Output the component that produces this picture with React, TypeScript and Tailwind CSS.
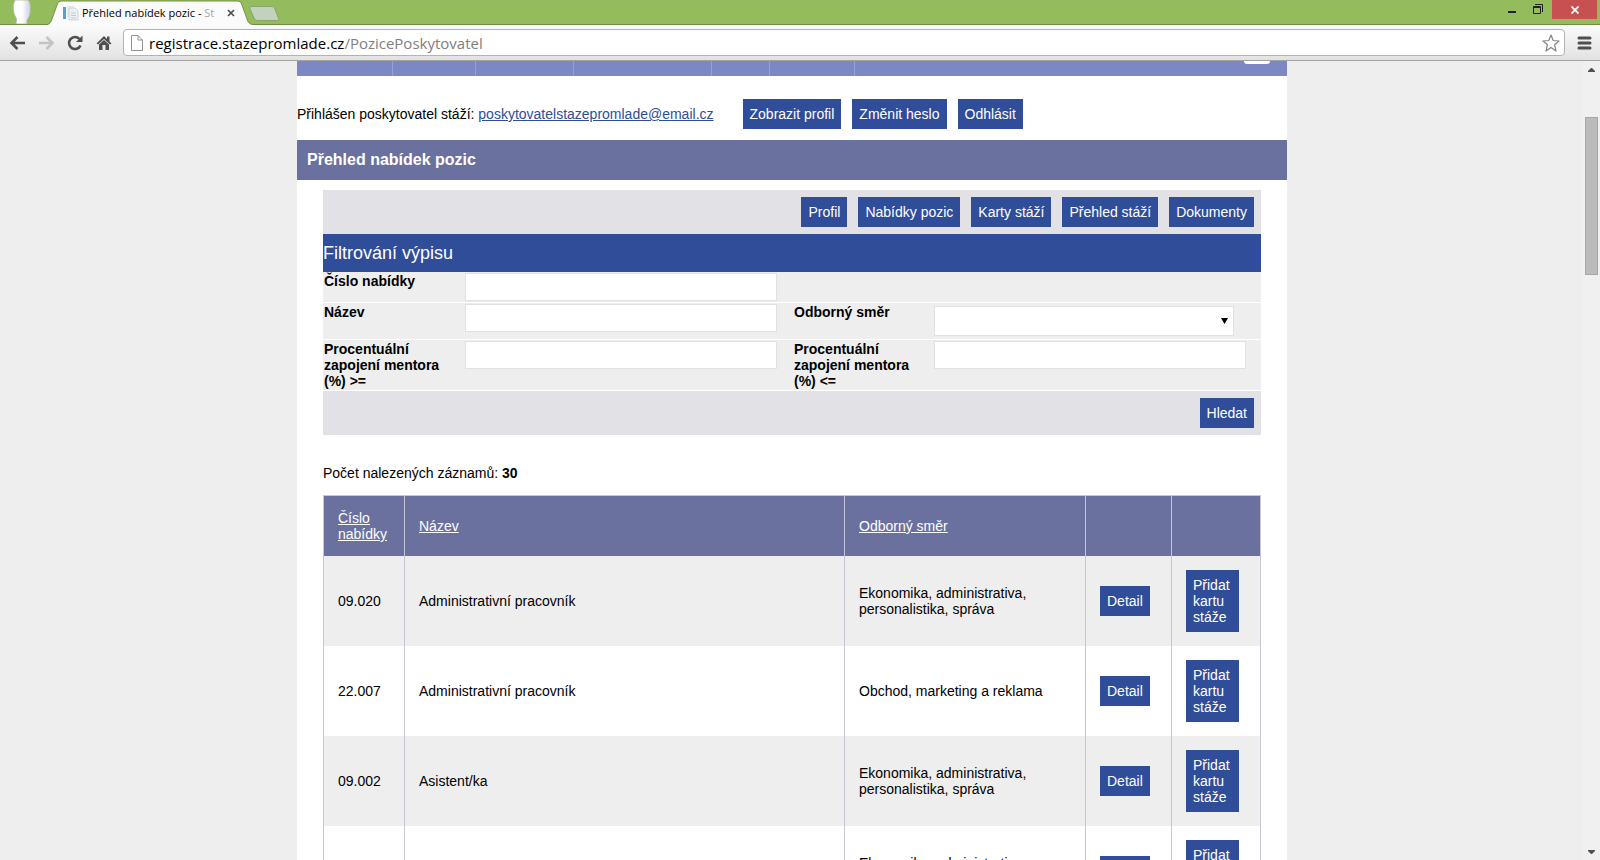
import type { ReactNode } from "react";

type Position = { id: string; code: string; title: string; field: string };

const POSITIONS: Position[] = [
  { id: "1", code: "09.020", title: "Administrativní pracovník", field: "Ekonomika, administrativa, personalistika, správa" },
  { id: "2", code: "22.007", title: "Administrativní pracovník", field: "Obchod, marketing a reklama" },
  { id: "3", code: "09.002", title: "Asistent/ka", field: "Ekonomika, administrativa, personalistika, správa" },
  { id: "4", code: "09.021", title: "Asistent/ka", field: "Ekonomika, administrativa, personalistika, správa" },
];

const SECTIONS = ["Profil", "Nabídky pozic", "Karty stáží", "Přehled stáží", "Dokumenty"];

function Btn({ children }: { children: ReactNode }) {
  return (
    <button type="button" className="bg-[#2f4d99] p-[7px] text-left text-sm leading-4 text-white">
      {children}
    </button>
  );
}

function TitleBar() {
  return (
    <div className="flex h-[25px] shrink-0 items-start border-b border-[#6f8b47] bg-[#94bb5c]">
      <svg className="ml-3 h-6 w-5 shrink-0" viewBox="0 0 20 24" aria-hidden="true">
        <defs>
          <linearGradient id="head" x1="0" x2="1">
            <stop offset="0.5" stopColor="#ffffff" />
            <stop offset="1" stopColor="#c9d0e0" />
          </linearGradient>
        </defs>
        <path
          d="M3 0C1 4 1 8 1.500 11C2 15 4 17 4.500 19L4 24H15L15 20C18 17 18.500 12 18.500 8C18.500 4 17.500 1 16 0Z"
          fill="url(#head)"
          stroke="#a9b99a"
          strokeWidth="0.800"
        />
      </svg>

      <div className="relative ml-[15px] flex h-[25px] w-[206px] shrink-0 items-center pl-4">
        <svg className="absolute inset-0" width="206" height="25" viewBox="0 0 206 25" aria-hidden="true">
          <path
            d="M0 25C3 24 4 22 5 19L10 5C11 2 12 1 15 1H190C193 1 194 2 195 5L200 19C201 22 202 24 206 25Z"
            fill="#fbfbfb"
          />
          <path
            d="M0 24.500C3 24 4 22 5 19L10 5C11 2 12 1 15 1H190C193 1 194 2 195 5L200 19C201 22 202 24 206 24.500"
            fill="none"
            stroke="#76914d"
          />
        </svg>
        <svg className="relative shrink-0" width="16" height="16" viewBox="0 0 16 16" aria-hidden="true">
          <path d="M0 2H3V14H0Z" fill="#5b9fd0" />
          <path d="M4 1H11V12H4Z" fill="#e3edf5" />
          <path d="M6 3H12L15 6V15H6Z" fill="#eef1f4" stroke="#c3ccd4" strokeWidth="0.800" />
          <path d="M8 8H13M8 10.500H13M8 13H13" stroke="#c0c9d2" />
        </svg>
        <span className="relative ml-[3px] w-[140px] whitespace-nowrap font-['Open_Sans',sans-serif] text-[11px] leading-4 text-black">
          Přehled nabídek pozic - <span className="text-[#a8a8a8]">St</span>
        </span>
        <button type="button" aria-label="Zavřít kartu" className="relative ml-1">
          <svg width="10" height="10" viewBox="0 0 10 10" aria-hidden="true">
            <path d="M2 2L8 8M8 2L2 8" stroke="#4d4d4d" strokeWidth="1.700" />
          </svg>
        </button>
      </div>

      <button type="button" aria-label="Nová karta" className="-ml-1 mt-[6px] shrink-0">
        <svg width="31" height="15" viewBox="0 0 31 15" aria-hidden="true">
          <path
            d="M3 0.500H22C24 0.500 25 1 26 3L29 11C30 13 30 14.500 28 14.500H9C7 14.500 6 14 5 12L1 3C0.500 1.500 1 0.500 3 0.500Z"
            fill="#c3d2bf"
            stroke="#88a566"
          />
        </svg>
      </button>

      <div className="ml-auto flex shrink-0 items-start pr-[3px]">
        <button type="button" aria-label="Minimalizovat">
          <svg width="26" height="19" viewBox="0 0 26 19" aria-hidden="true">
            <path d="M8 11H16V13H8Z" fill="#222" />
          </svg>
        </button>
        <button type="button" aria-label="Obnovit">
          <svg width="26" height="19" viewBox="0 0 26 19" aria-hidden="true">
            <path d="M7.500 6.500H14.500V13.500H7.500Z" fill="none" stroke="#222" />
            <path d="M7 7.500H15M9 4.500H16.500V12" fill="none" stroke="#222" />
          </svg>
        </button>
        <button type="button" aria-label="Zavřít" className="flex h-[19px] w-[45px] items-center justify-center bg-[#c75050]">
          <svg width="8" height="8" viewBox="0 0 8 8" aria-hidden="true">
            <path d="M0.500 0.500L7.500 7.500M7.500 0.500L0.500 7.500" stroke="#fff" strokeWidth="1.800" />
          </svg>
        </button>
      </div>
    </div>
  );
}

function Toolbar() {
  return (
    <div className="flex h-9 shrink-0 items-center border-b border-[#a3a3a3] bg-linear-to-b from-[#fbfbfb] to-[#e2e2e2] pl-[9px] pr-2">
      <button type="button" aria-label="Zpět">
        <svg width="17" height="16" viewBox="0 0 17 16" aria-hidden="true">
          <path d="M8.500 2L2.500 8L8.500 14M3 8H16" fill="none" stroke="#4f4f4f" strokeWidth="2.600" />
        </svg>
      </button>
      <button type="button" aria-label="Vpřed" className="ml-3">
        <svg width="17" height="16" viewBox="0 0 17 16" aria-hidden="true">
          <path d="M8.500 2L14.500 8L8.500 14M14 8H1" fill="none" stroke="#c4c4c4" strokeWidth="2.600" />
        </svg>
      </button>
      <button type="button" aria-label="Načíst znovu" className="ml-3">
        <svg width="17" height="16" viewBox="0 0 17 16" aria-hidden="true">
          <path d="M13.500 10.500A6 6 0 1 1 12.500 4" fill="none" stroke="#4f4f4f" strokeWidth="2.600" />
          <path d="M15.500 0.500V7H9Z" fill="#4f4f4f" />
        </svg>
      </button>
      <button type="button" aria-label="Domů" className="ml-3">
        <svg width="16" height="16" viewBox="0 0 16 16" aria-hidden="true">
          <path d="M8 1L0.500 8.500L2 9.500L8 4L14 9.500L15.500 8.500L13.500 6.500V1.500H11V4Z" fill="#4f4f4f" />
          <path d="M3 9.500L8 5L13 9.500V15H9.500V10H6.500V15H3Z" fill="#4f4f4f" />
        </svg>
      </button>

      <div className="ml-[11px] flex h-[27px] min-w-0 flex-1 items-center rounded-sm border border-[#b3b3b3] bg-white pl-[7px] pr-1">
        <svg className="shrink-0" width="12" height="16" viewBox="0 0 12 16" aria-hidden="true">
          <path d="M0.500 0.500H7L11.500 5V15.500H0.500ZM7 0.500V5H11.500" fill="#fff" stroke="#909090" />
        </svg>
        <label htmlFor="path" className="ml-[6px] font-['Open_Sans',sans-serif] text-[15px] leading-5 text-black">
          registrace.stazepromlade.cz
        </label>
        <input
          id="path"
          type="text"
          defaultValue="/PozicePoskytovatel"
          className="min-w-0 flex-1 bg-transparent font-['Open_Sans',sans-serif] text-[15px] leading-5 text-[#808080] outline-none"
        />
        <button type="button" aria-label="Přidat záložku" className="shrink-0">
          <svg width="18" height="18" viewBox="0 0 18 18" aria-hidden="true">
            <path
              d="M9 1L11.200 6.500L17 7L12.600 10.800L14 17L9 13.600L4 17L5.400 10.800L1 7L6.800 6.500Z"
              fill="#fff"
              stroke="#858585"
              strokeWidth="1.200"
              strokeLinejoin="round"
            />
          </svg>
        </button>
      </div>

      <button type="button" aria-label="Nabídka" className="ml-3 shrink-0">
        <svg width="15" height="14" viewBox="0 0 15 14" aria-hidden="true">
          <path d="M2 2H13M2 7H13M2 12H13" stroke="#4f4f4f" strokeWidth="3" strokeLinecap="round" />
        </svg>
      </button>
    </div>
  );
}

function FilterLabel({ htmlFor, children }: { htmlFor: string; children: ReactNode }) {
  return (
    <label htmlFor={htmlFor} className="pr-4 text-sm font-bold leading-4">
      {children}
    </label>
  );
}

function FilterInput({ id }: { id: string }) {
  return <input id={id} type="text" className="h-7 w-full max-w-[312px] border border-[#e1e1e1] bg-white px-2 text-sm" />;
}

function FilterRow({ children }: { children: ReactNode }) {
  return (
    <div className="grid grid-cols-[141px_minmax(0,329fr)_140px_minmax(0,327fr)] items-start border-b border-white bg-[#eee] py-px pl-px">
      {children}
    </div>
  );
}

function Filter() {
  return (
    <form>
      <nav className="flex flex-wrap justify-end gap-[11px] bg-[#e1e1e6] p-[7px]">
        {SECTIONS.map((s) => (
          <Btn key={s}>{s}</Btn>
        ))}
      </nav>
      <h2 className="bg-[#2f4d99] py-[7px] text-[18px] leading-6 text-white">Filtrování výpisu</h2>
      <FilterRow>
        <FilterLabel htmlFor="code">Číslo nabídky</FilterLabel>
        <FilterInput id="code" />
      </FilterRow>
      <FilterRow>
        <FilterLabel htmlFor="title">Název</FilterLabel>
        <FilterInput id="title" />
        <FilterLabel htmlFor="field">Odborný směr</FilterLabel>
        <div className="relative my-0.5 w-full max-w-[300px]">
          <select id="field" className="block h-[30px] w-full appearance-none border border-[#e1e1e1] bg-white px-2 text-sm">
            <option value=""></option>
          </select>
          <svg className="pointer-events-none absolute right-1.5 top-3 h-1.5 w-[7px]" viewBox="0 0 7 6" aria-hidden="true">
            <path d="M0 0H7L3.500 6Z" fill="#000" />
          </svg>
        </div>
      </FilterRow>
      <FilterRow>
        <FilterLabel htmlFor="min">Procentuální zapojení mentora (%) &gt;=</FilterLabel>
        <FilterInput id="min" />
        <FilterLabel htmlFor="max">Procentuální zapojení mentora (%) &lt;=</FilterLabel>
        <FilterInput id="max" />
      </FilterRow>
      <div className="flex justify-end bg-[#e1e1e6] p-[7px]">
        <Btn>Hledat</Btn>
      </div>
    </form>
  );
}

function PositionsTable() {
  return (
    <table className="mt-[14px] w-full table-fixed border-separate border-spacing-0 border-l border-t border-[#c6c6d4] text-sm leading-4">
      <colgroup>
        <col className="w-[81px]" />
        <col />
        <col className="w-[241px]" />
        <col className="w-[86px]" />
        <col className="w-[89px]" />
      </colgroup>
      <thead>
        <tr className="h-[60px] bg-[#6a719f] text-left text-white [&>*]:border-r [&>*]:border-[#c6c6d4] [&>*]:px-[14px] [&>*]:font-normal">
          <th scope="col">
            <a href="#code" className="underline">Číslo nabídky</a>
          </th>
          <th scope="col">
            <a href="#title" className="underline">Název</a>
          </th>
          <th scope="col">
            <a href="#field" className="underline">Odborný směr</a>
          </th>
          <td />
          <td />
        </tr>
      </thead>
      <tbody>
        {POSITIONS.map((p) => (
          <tr
            key={p.id}
            className="bg-white odd:bg-[#eee] [&>td]:border-r [&>td]:border-[#c6c6d4] [&>td]:p-[14px]"
          >
            <td>{p.code}</td>
            <td>{p.title}</td>
            <td>{p.field}</td>
            <td>
              <Btn>Detail</Btn>
            </td>
            <td>
              <div className="flex w-[53px]">
                <Btn>Přidat kartu stáže</Btn>
              </div>
            </td>
          </tr>
        ))}
      </tbody>
    </table>
  );
}

function Scrollbar() {
  return (
    <div className="flex w-[17px] shrink-0 flex-col items-center bg-[#f0f0f0] pb-1.5 pt-[7px]" aria-hidden="true">
      <svg width="7" height="4" viewBox="0 0 7 4">
        <path d="M3 0H4L7 3V4H0V3Z" fill="#505050" />
      </svg>
      <div className="mt-[45px] h-[158px] w-[13px] border border-[#a6a6a6] bg-[#bbb]" />
      <svg className="mt-auto" width="7" height="4" viewBox="0 0 7 4">
        <path d="M3 4H4L7 1V0H0V1Z" fill="#505050" />
      </svg>
    </div>
  );
}

export default function App() {
  return (
    <div className="flex h-screen flex-col overflow-hidden bg-[#eee] font-['Liberation_Sans',Arial,sans-serif] text-black">
      <TitleBar />
      <Toolbar />
      <div className="flex min-h-0 flex-1">
        <div className="min-w-0 flex-1 overflow-hidden pl-px">
          <main className="mx-auto w-full max-w-[990px] bg-white">
            {/* bottom edge of the site menu, the rest is scrolled away */}
            <div className="flex h-[15px] items-start bg-[#7c88c3]">
              <div className="h-full w-24 border-r border-[#96a0d2]" />
              <div className="h-full w-[83px] border-r border-[#96a0d2]" />
              <div className="h-full w-[98px] border-r border-[#96a0d2]" />
              <div className="h-full w-[138px] border-r border-[#96a0d2]" />
              <div className="h-full w-[58px] border-r border-[#96a0d2]" />
              <div className="h-full w-[85px] border-r border-[#96a0d2]" />
              <div className="ml-auto mr-[17px] h-[3px] w-[26px] rounded-b bg-white" />
            </div>

            <div className="flex items-center pb-[11px] pt-[23px] text-sm leading-4">
              <p className="mr-[29px]">
                Přihlášen poskytovatel stáží:{" "}
                <a href="mailto:poskytovatelstazepromlade@email.cz" className="text-[#2f4d99] underline">
                  poskytovatelstazepromlade@email.cz
                </a>
              </p>
              <div className="flex gap-[11px]">
                <Btn>Zobrazit profil</Btn>
                <Btn>Změnit heslo</Btn>
                <Btn>Odhlásit</Btn>
              </div>
            </div>

            <h1 className="bg-[#6a719f] px-[10px] py-2 text-base font-bold leading-6 text-white">Přehled nabídek pozic</h1>

            <div className="px-[26px] pt-[10px]">
              <Filter />
              <p className="mt-[30px] text-sm leading-4">
                Počet nalezených záznamů: <b>30</b>
              </p>
              <PositionsTable />
            </div>
          </main>
        </div>
        <Scrollbar />
      </div>
    </div>
  );
}
